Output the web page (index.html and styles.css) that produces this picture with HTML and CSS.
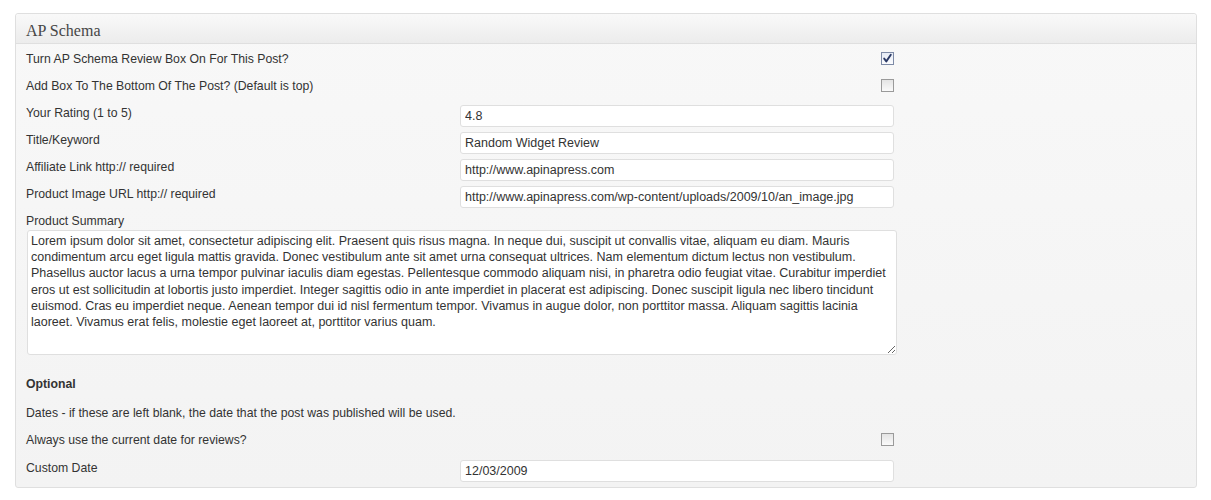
FILE: index.html
```html
<!DOCTYPE html>
<html>
<head>
<meta charset="utf-8">
<link rel="stylesheet" href="styles.css">
</head>
<body>
<div class="postbox">
  <h3 class="hndle">AP Schema</h3>
  <div class="inside">
    <div class="row">
      <span class="label">Turn AP Schema Review Box On For This Post?</span>
      <span class="field field-check"><span class="check checked"><svg width="11" height="11" viewBox="0 0 11 11"><path d="M2.2 5.6 L4.3 8.4 L8.8 1.8" fill="none" stroke="#2b3a66" stroke-width="1.9" stroke-linecap="round" stroke-linejoin="round"/></svg></span></span>
    </div>
    <div class="row">
      <span class="label">Add Box To The Bottom Of The Post? (Default is top)</span>
      <span class="field field-check"><span class="check"></span></span>
    </div>
    <div class="row">
      <span class="label">Your Rating (1 to 5)</span>
      <span class="field"><input class="text" type="text" value="4.8"></span>
    </div>
    <div class="row">
      <span class="label">Title/Keyword</span>
      <span class="field"><input class="text" type="text" value="Random Widget Review"></span>
    </div>
    <div class="row">
      <span class="label">Affiliate Link http:// required</span>
      <span class="field"><input class="text" type="text" value="http://www.apinapress.com"></span>
    </div>
    <div class="row">
      <span class="label">Product Image URL http:// required</span>
      <span class="field"><input class="text" type="text" value="http://www.apinapress.com/wp-content/uploads/2009/10/an_image.jpg"></span>
    </div>
    <div class="summary">
      <span class="label">Product Summary</span>
      <textarea class="area" wrap="off">Lorem ipsum dolor sit amet, consectetur adipiscing elit. Praesent quis risus magna. In neque dui, suscipit ut convallis vitae, aliquam eu diam. Mauris
condimentum arcu eget ligula mattis gravida. Donec vestibulum ante sit amet urna consequat ultrices. Nam elementum dictum lectus non vestibulum.
Phasellus auctor lacus a urna tempor pulvinar iaculis diam egestas. Pellentesque commodo aliquam nisi, in pharetra odio feugiat vitae. Curabitur imperdiet
eros ut est sollicitudin at lobortis justo imperdiet. Integer sagittis odio in ante imperdiet in placerat est adipiscing. Donec suscipit ligula nec libero tincidunt
euismod. Cras eu imperdiet neque. Aenean tempor dui id nisl fermentum tempor. Vivamus in augue dolor, non porttitor massa. Aliquam sagittis lacinia
laoreet. Vivamus erat felis, molestie eget laoreet at, porttitor varius quam.</textarea>
    </div>
    <div class="optional">Optional</div>
    <div class="row note">
      <span class="label">Dates - if these are left blank, the date that the post was published will be used.</span>
    </div>
    <div class="row">
      <span class="label">Always use the current date for reviews?</span>
      <span class="field field-check"><span class="check"></span></span>
    </div>
    <div class="row row-last">
      <span class="label">Custom Date</span>
      <span class="field"><input class="text" type="text" value="12/03/2009"></span>
    </div>
  </div>
</div>
</body>
</html>
```

FILE: styles.css
```css
html, body {
  margin: 0;
  padding: 0;
  background: #ffffff;
}

body {
  padding: 13px 13px 0 15px;
  font-family: "Liberation Sans", Arial, sans-serif;
  font-size: 12px;
  color: #333333;
}

.postbox {
  width: 1180px;
  border: 1px solid #dfdfdf;
  border-radius: 3px;
  background: linear-gradient(to bottom, #f8f8f8, #f3f3f3);
  box-shadow: inset 0 1px 0 #ffffff;
}

.hndle {
  margin: 0;
  height: 30px;
  box-sizing: border-box;
  padding: 7px 10px 0 10px;
  font-family: "Liberation Serif", "Times New Roman", serif;
  font-size: 16px;
  font-weight: normal;
  line-height: 20px;
  color: #464646;
  background: linear-gradient(to bottom, #f9f9f9, #ececec);
  border-bottom: 1px solid #dfdfdf;
  border-radius: 3px 3px 0 0;
}

.inside {
  padding: 7px 0 5px 10px;
  width: 869px;
  display: flex;
  flex-direction: column;
}

.row {
  display: grid;
  grid-template-columns: 434px 435px;
  height: 22px;
  margin-bottom: 5px;
}

.row-last {
  margin-bottom: 0;
  margin-top: 1px;
}

.label {
  padding-top: 1px;
  font-size: 12.25px;
  line-height: 14px;
  color: #333333;
}

.field {
  display: flex;
}

.field-check {
  justify-content: flex-end;
  padding-right: 1px;
}

.check {
  width: 11px;
  height: 11px;
  margin-top: 1px;
  border: 1px solid #9a9a9a;
  background: linear-gradient(to bottom, #e4e4e4, #fafafa);
  display: flex;
  align-items: center;
  justify-content: center;
}

.check.checked {
  border-color: #7d8aa6;
  background: linear-gradient(to bottom, #e6ebf5, #fbfcfe);
}

.text {
  width: 434px;
  height: 22px;
  box-sizing: border-box;
  margin: 0;
  padding: 2px 4px;
  border: 1px solid #dfdfdf;
  border-radius: 3px;
  background: #ffffff;
  font-family: "Liberation Sans", Arial, sans-serif;
  font-size: 12.5px;
  color: #333333;
  outline: none;
}

.summary {
  display: flex;
  flex-direction: column;
}

.summary .label {
  margin-bottom: 2px;
}

.area {
  width: 870px;
  height: 125px;
  box-sizing: border-box;
  margin: 0 0 0 1px;
  padding: 2px 3px;
  border: 1px solid #dfdfdf;
  border-radius: 3px;
  background: #ffffff;
  font-family: "Liberation Sans", Arial, sans-serif;
  font-size: 12.5px;
  line-height: 16.2px;
  color: #333333;
  white-space: pre;
  resize: vertical;
  overflow: hidden;
  outline: none;
}

.optional {
  margin-top: 21px;
  margin-bottom: 14px;
  padding-top: 1px;
  font-size: 12.25px;
  font-weight: bold;
  line-height: 14px;
}

.note {
  margin-bottom: 5px;
}
```
